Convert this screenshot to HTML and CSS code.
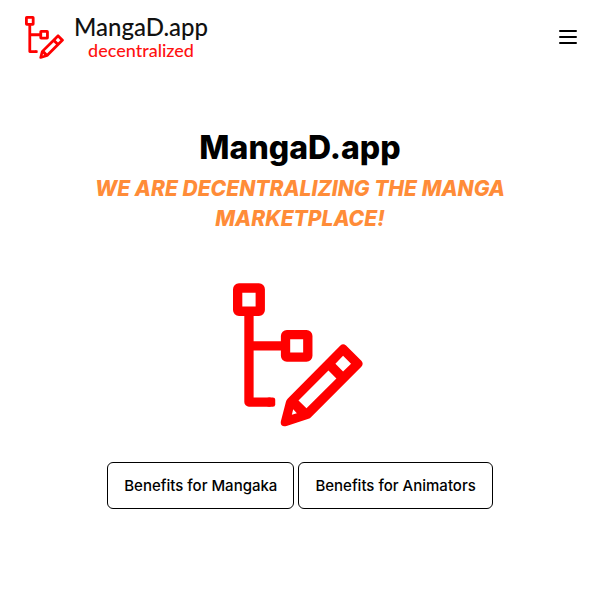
FILE: index.html
```html
<!DOCTYPE html>
<html lang="en">
<head>
<meta charset="utf-8">
<meta name="viewport" content="width=device-width, initial-scale=1">
<title>MangaD.app</title>
<link rel="stylesheet" href="styles.css">
</head>
<body>
<header class="header">
  <a class="brand" href="#">
    <svg class="brand-icon" viewBox="39 39 391 431" aria-hidden="true">
      <use href="#mark"/>
    </svg>
    <span class="brand-text">
      <span class="brand-name">MangaD.app</span>
      <span class="brand-tag">decentralized</span>
    </span>
  </a>
  <button class="menu" type="button" aria-label="Open menu">
    <svg class="menu-icon" viewBox="0 0 18 14" aria-hidden="true">
      <path d="M1 1h16M1 7h16M1 13h16" fill="none" stroke="#000" stroke-width="2" stroke-linecap="round"/>
    </svg>
  </button>
</header>
<main class="hero">
  <h1 class="title">MangaD.app</h1>
  <p class="subtitle">WE ARE DECENTRALIZING THE MANGA MARKETPLACE!</p>
  <svg class="hero-icon" viewBox="39 39 403 431" role="img" aria-label="MangaD logo">
    <g id="mark" fill="none" stroke="#f00" stroke-width="28" stroke-linejoin="round">
      <rect x="53" y="53" width="68" height="70" rx="4"/>
      <rect x="197" y="193" width="67" height="68" rx="4"/>
      <path d="M87 123V396H152M87 227H197"/>
      <rect x="140" y="382" width="26" height="28" rx="7" fill="#f00" stroke="none"/>
      <path fill="#f00" fill-rule="evenodd" stroke="none" d="M362 226Q370 218 379 226L425 272Q433 281 425 290L275 440Q271 445 264 447L200 468Q180 472 183 454L198 396Q199 390 204 385ZM370 257L394 281L370 304L347 281ZM326 301L350 325L260 415L236 391ZM220 418L231 430L216 434Z"/>
    </g>
  </svg>
  <div class="actions">
    <a class="button" href="#mangaka">Benefits for Mangaka</a>
    <a class="button" href="#animators">Benefits for Animators</a>
  </div>
</main>
</body>
</html>
```
FILE: styles.css
```css
* {
  box-sizing: border-box;
}

body {
  margin: 0;
  background: #fff;
  color: #000;
  font-family: Inter, "Liberation Sans", sans-serif;
}

.header {
  display: flex;
  align-items: center;
  justify-content: space-between;
  padding: 14px 15px 12px 25px;
}

.brand {
  display: flex;
  align-items: center;
  gap: 10px;
  color: #111;
  text-decoration: none;
}

.brand-icon {
  width: 39px;
  height: 43px;
}

.brand-text {
  display: flex;
  flex-direction: column;
  align-items: center;
  font-family: Lato, sans-serif;
  font-weight: 500;
}

.brand-name {
  font-size: 24px;
  line-height: 26px;
}

.brand-tag {
  color: #f11;
  font-size: 18px;
  line-height: 20px;
}

.menu {
  display: flex;
  padding: 8px;
  border: 0;
  background: none;
}

.menu-icon {
  width: 18px;
  height: 14px;
}

.hero {
  display: flex;
  flex-direction: column;
  align-items: center;
  padding: 56px 64px;
  text-align: center;
}

.title {
  margin: 0;
  font-size: 32px;
  font-weight: 800;
  line-height: 40px;
}

.subtitle {
  max-width: 440px;
  margin: 6px 0 0;
  color: #ff8c38;
  font-size: 21px;
  font-style: italic;
  font-weight: 800;
  line-height: 30px;
}

.hero-icon {
  width: 134px;
  height: 144px;
  margin: 49px 0 35px;
}

.actions {
  display: flex;
  gap: 4px;
}

.button {
  padding: 11px 16px;
  border: 1px solid #000;
  border-radius: 6px;
  color: #000;
  font-size: 15px;
  font-weight: 500;
  line-height: 23px;
  text-decoration: none;
}
```
